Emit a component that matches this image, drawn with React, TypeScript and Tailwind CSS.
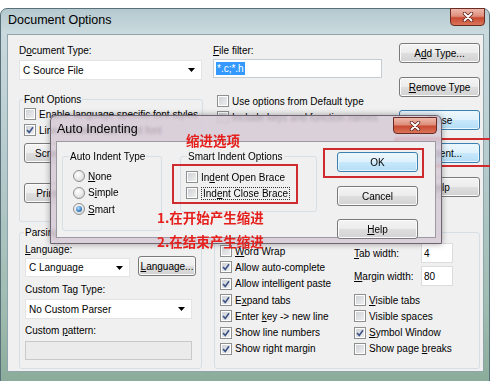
import React from "react";

const btnBase =
  "h-[20px] flex items-center justify-center rounded-[3px] border text-[10px] leading-[13px] text-black shrink-0";
const btnNormal =
  "border-[#7a7a7a] bg-[linear-gradient(180deg,#f4f4f4_0%,#ececec_48%,#dedede_52%,#d2d2d2_100%)] shadow-[inset_0_0_0_1px_#fbfbfb]";
const btnBlue =
  "border-[#3c7fb1] bg-[linear-gradient(180deg,#eef7fd_0%,#def1fc_48%,#c8e8fb_52%,#b3ddf6_100%)] shadow-[inset_0_0_0_1px_#e8f6fd]";

function Button({
  children,
  blue,
  className = "",
}: {
  children: React.ReactNode;
  blue?: boolean;
  className?: string;
}) {
  return <div className={`${btnBase} ${blue ? btnBlue : btnNormal} ${className}`}>{children}</div>;
}

function CloseBtn({ className = "" }: { className?: string }) {
  return (
    <div
      className={`flex items-center justify-center rounded-b-[4px] border border-[#6b2a23] bg-[linear-gradient(180deg,#eeb8ab_0%,#de8e7b_45%,#c84a32_55%,#da7559_100%)] ${className}`}
    >
      <svg width="12" height="10" viewBox="0 0 12 10">
        <path d="M2.5 1.5 L9.5 8.5 M9.5 1.5 L2.5 8.5" stroke="#5a2018" strokeWidth="3.4" strokeLinecap="round" />
        <path d="M2.5 1.5 L9.5 8.5 M9.5 1.5 L2.5 8.5" stroke="#ffffff" strokeWidth="1.9" strokeLinecap="round" />
      </svg>
    </div>
  );
}

function Check({ checked }: { checked?: boolean }) {
  return (
    <span className="w-[12px] h-[12px] shrink-0 border border-[#8e8f8f] bg-white p-[1px] flex">
      <span className="flex-1 flex items-center justify-center bg-[linear-gradient(135deg,#cfd2d6_0%,#eeeeef_100%)]">
        {checked && (
          <svg width="8" height="8" viewBox="0 0 8 8">
            <path d="M1 4 L3.2 6.4 L7 1.2" stroke="#3d5488" strokeWidth="1.6" fill="none" />
          </svg>
        )}
      </span>
    </span>
  );
}

function CheckRow({
  text,
  checked,
  className = "",
}: {
  text: React.ReactNode;
  checked?: boolean;
  className?: string;
}) {
  return (
    <div className={`flex items-center gap-[3px] whitespace-nowrap ${className}`}>
      <Check checked={checked} />
      <span>{text}</span>
    </div>
  );
}

function Radio({ selected, text }: { selected?: boolean; text: React.ReactNode }) {
  return (
    <div className="h-[16.5px] flex items-center gap-[3px] ml-[4px]">
      <span className="w-[12px] h-[12px] rounded-full border border-[#8e8f8f] bg-[radial-gradient(circle_at_40%_35%,#ffffff_0%,#e4e4e4_60%,#c8c8c8_100%)] flex items-center justify-center">
        {selected && (
          <span className="w-[6px] h-[6px] rounded-full bg-[radial-gradient(circle_at_40%_35%,#b8e0ff_0%,#3f86c6_55%,#1d4f82_100%)]" />
        )}
      </span>
      <span>{text}</span>
    </div>
  );
}

function Combo({ text, className = "" }: { text: string; className?: string }) {
  return (
    <div className={`bg-white border border-[#e2e4e6] flex items-center justify-between pl-[3px] pr-[6px] ${className}`}>
      <span>{text}</span>
      <svg width="7" height="4" viewBox="0 0 7 4">
        <path d="M0 0 H7 L3.5 4 Z" fill="#000" />
      </svg>
    </div>
  );
}

function NumField({ text }: { text: string }) {
  return (
    <div className="w-[32px] h-[20px] bg-white border border-[#dcdcdc] flex items-center pl-[2px]">{text}</div>
  );
}

const groupBox = "border border-[#d5dfe5] rounded-[3px]";
const note =
  "absolute text-[13.5px] leading-[16px] font-bold text-[#e5201c] font-['Noto_Sans_CJK_SC',sans-serif]";

export default function App() {
  return (
    <div className="relative w-[490px] h-[381px] overflow-hidden bg-white text-[10px] leading-[13px] text-black font-['Liberation_Sans',Arial,sans-serif]">
      {/* Document Options window */}
      <div className="mt-[8px] w-[490px] h-[380px] rounded-t-[7px] border border-[#58707a] bg-[linear-gradient(180deg,#b4c9cf_0%,#c9d9dd_6%,#b6cbcd_40%,#9fbbb0_80%,#8aab99_100%)] pl-[6px] pr-[5px]">
        <div className="h-[25px] flex items-start justify-between">
          <span className="mt-[4px] ml-[1px] text-[12.5px] leading-[15px]">Document Options</span>
          <CloseBtn className="w-[35px] h-[18px] -mt-[1px] -mr-[1px]" />
        </div>
        <div className="h-[338px] border border-[#8fa4ab] bg-[#f0f0f0]">
          <div className="h-[191px] flex pl-[11px]">
            <div className="w-[183px] flex flex-col">
              <span className="mt-[9px]">
                D<u>o</u>cument Type:
              </span>
              <Combo className="mt-[3px] h-[20px]" text="C Source File" />
              <fieldset className={`mt-[13px] w-[182px] h-[129px] px-[4px] ${groupBox}`}>
                <legend className="px-[1px] -ml-[1px]">Font Options</legend>
                <CheckRow className="h-[16px]" text="Enable language specific font styles" />
                <CheckRow className="h-[16px]" checked text="Line numbers use fixed font" />
                <Button className="mt-[5px] w-[85px]">Screen Font...</Button>
                <Button className="mt-[20px] w-[85px]">Printer Font...</Button>
              </fieldset>
            </div>

            <div className="ml-[11px] w-[169px] flex flex-col">
              <span className="mt-[9px]">
                <u>F</u>ile filter:
              </span>
              <div className="mt-[2px] h-[19px] bg-white border border-[#c4ccd4] flex items-center pl-[2px]">
                <span className="bg-[#3399ff] text-white px-[1px]">*.c;*.h</span>
              </div>
              <CheckRow className="mt-[15px] ml-[4px] h-[16px]" text="Use options from Default type" />
              <CheckRow className="ml-[4px] h-[16px]" text="Include keys and function names" />
            </div>

            <div className="ml-[17px] w-[81px] flex flex-col">
              <Button className="mt-[8px]">
                A<u>d</u>d Type...
              </Button>
              <Button className="mt-[14px]">
                <u>R</u>emove Type
              </Button>
              <Button blue className="mt-[13px]">
                Close
              </Button>
              <Button blue className="mt-[13px] pl-[9px]">
                <u>I</u>ndent...
              </Button>
              <Button className="mt-[14px]">
                <u>H</u>elp
              </Button>
            </div>
          </div>

          <div className="flex pl-[11px]">
            <fieldset className={`w-[182px] h-[143px] px-[5px] ${groupBox}`}>
              <legend className="px-[1px] -ml-[1px]">Parsing</legend>
              <div className="mt-[4px]">
                <u>L</u>anguage:
              </div>
              <div className="flex items-start h-[22px]">
                <Combo className="mt-[2px] w-[105px] h-[19px]" text="C Language" />
                <Button className="ml-[8px] w-[58px]">
                  <u>L</u>anguage...
                </Button>
              </div>
              <div className="mt-[5px]">Custom Tag Type:</div>
              <Combo className="mt-[3px] w-[167px] h-[20px]" text="No Custom Parser" />
              <div className="mt-[5px]">
                Custom <u>p</u>attern:
              </div>
              <div className="mt-[4px] w-[167px] h-[19px] border border-[#c9c9c9] bg-[#ebebeb]" />
            </fieldset>

            <fieldset className={`ml-[12px] w-[266px] h-[143px] px-[5px] ${groupBox}`}>
              <legend className="px-[1px] -ml-[1px]">Editing</legend>
              <div className="flex">
                <div className="w-[134px] pt-[4px] flex flex-col">
                  <CheckRow className="h-[16.3px]" text={<><u>W</u>ord Wrap</>} />
                  <CheckRow className="h-[16.3px]" checked text="Allow auto-complete" />
                  <CheckRow className="h-[16.3px]" checked text="Allow intelligent paste" />
                  <CheckRow className="h-[16.3px]" checked text={<>E<u>x</u>pand tabs</>} />
                  <CheckRow className="h-[16.3px]" checked text={<>Enter <u>k</u>ey -&gt; new line</>} />
                  <CheckRow className="h-[16.3px]" checked text="Show line numbers" />
                  <CheckRow className="h-[16.3px]" checked text="Show right margin" />
                </div>
                <div className="pt-[4px] flex flex-col">
                  <div className="h-[20px] flex items-center">
                    <span className="w-[67px]">
                      <u>T</u>ab width:
                    </span>
                    <NumField text="4" />
                  </div>
                  <div className="mt-[3px] h-[20px] flex items-center">
                    <span className="w-[67px]">
                      <u>M</u>argin width:
                    </span>
                    <NumField text="80" />
                  </div>
                  <div className="mt-[5.9px] flex flex-col">
                    <CheckRow className="h-[16.3px]" text={<><u>V</u>isible tabs</>} />
                    <CheckRow className="h-[16.3px]" text="Visible spaces" />
                    <CheckRow className="h-[16.3px]" checked text={<><u>S</u>ymbol Window</>} />
                    <CheckRow className="h-[16.3px]" text={<>Show page <u>b</u>reaks</>} />
                  </div>
                </div>
              </div>
            </fieldset>
          </div>
        </div>
      </div>

      {/* annotation box around Indent... (under the dialog) */}
      <div className="absolute left-[395px] top-[138px] w-[100px] h-[29px] border-2 border-[#cf2a2e]" />

      {/* Auto Indenting dialog */}
      <div className="absolute left-[50px] top-[115px] w-[392px] h-[129px] rounded-t-[6px] border border-[#6e6472] bg-[#d4c8d5]/80 backdrop-blur-[1.5px] px-[5px] shadow-[0_0_6px_rgba(0,0,0,0.35)]">
        <div className="h-[25px] flex items-start justify-between">
          <span className="mt-[6px] ml-[1px] text-[12.5px] leading-[15px]">Auto Indenting</span>
          <CloseBtn className="w-[44px] h-[17px] mt-[1px] -mr-[1px]" />
        </div>
        <div className="h-[97px] border border-[#9c9aa0] bg-[#f0f0f0] flex items-start">
          <fieldset className={`ml-[5px] mt-[8px] w-[100px] h-[81px] pl-[6px] ${groupBox}`}>
            <legend className="px-[1px]">Auto Indent Type</legend>
            <div className="mt-[5px]">
              <Radio text={<><u>N</u>one</>} />
              <Radio text={<>S<u>i</u>mple</>} />
              <Radio selected text={<><u>S</u>mart</>} />
            </div>
          </fieldset>
          <fieldset className={`ml-[18px] mt-[8px] w-[137px] h-[62px] pl-[6px] ${groupBox}`}>
            <legend className="px-[1px]">Smart Indent Options</legend>
            <div className="mt-[6px] -ml-[1px]">
              <CheckRow className="h-[16px]" text={<>In<u>d</u>ent Open Brace</>} />
              <CheckRow
                className="h-[16px]"
                text={
                  <span className="border border-dotted border-[#333] px-[1px]">
                    Ind<u>e</u>nt Close Brace
                  </span>
                }
              />
            </div>
          </fieldset>
          <div className="ml-[20px] mt-[10px] w-[81px] flex flex-col">
            <Button blue>OK</Button>
            <Button className="mt-[14px]">Cancel</Button>
            <Button className="mt-[13px]">
              <u>H</u>elp
            </Button>
          </div>
        </div>
      </div>

      {/* red annotations */}
      <div className="absolute left-[172px] top-[164px] w-[126px] h-[40px] border-2 border-[#cf2a2e]" />
      <div className="absolute left-[323px] top-[148px] w-[101px] h-[30px] border-2 border-[#cf2a2e]" />
      <div className={`${note} left-[186px] top-[132px]`}>缩进选项</div>
      <div className={`${note} left-[157px] top-[209px]`}>1.在开始产生缩进</div>
      <div className={`${note} left-[157px] top-[233px]`}>2.在结束产生缩进</div>
    </div>
  );
}
